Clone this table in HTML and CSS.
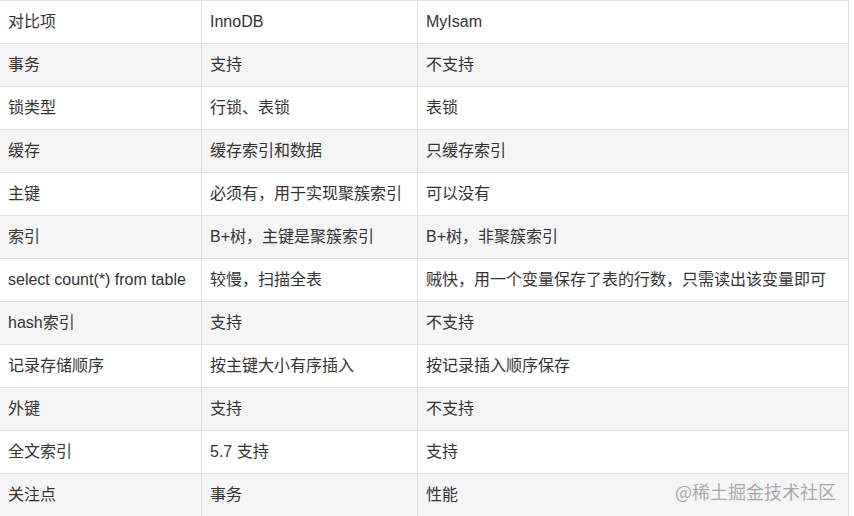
FILE: index.html
```html
<!DOCTYPE html>
<html lang="zh">
<head>
<meta charset="utf-8">
<link rel="stylesheet" href="styles.css">
</head>
<body>
<div class="wrap">
<table class="cmp">
<colgroup><col class="c1"><col class="c2"><col class="c3"></colgroup>
<tr><td>对比项</td><td>InnoDB</td><td>MyIsam</td></tr>
<tr><td>事务</td><td>支持</td><td>不支持</td></tr>
<tr><td>锁类型</td><td>行锁、表锁</td><td>表锁</td></tr>
<tr><td>缓存</td><td>缓存索引和数据</td><td>只缓存索引</td></tr>
<tr><td>主键</td><td>必须有，用于实现聚簇索引</td><td>可以没有</td></tr>
<tr><td>索引</td><td>B+树，主键是聚簇索引</td><td>B+树，非聚簇索引</td></tr>
<tr><td>select count(*) from table</td><td>较慢，扫描全表</td><td>贼快，用一个变量保存了表的行数，只需读出该变量即可</td></tr>
<tr><td>hash索引</td><td>支持</td><td>不支持</td></tr>
<tr><td>记录存储顺序</td><td>按主键大小有序插入</td><td>按记录插入顺序保存</td></tr>
<tr><td>外键</td><td>支持</td><td>不支持</td></tr>
<tr><td>全文索引</td><td>5.7 支持</td><td>支持</td></tr>
<tr><td>关注点</td><td>事务</td><td>性能</td></tr>
</table>
<div class="mark">@稀土掘金技术社区</div>
</div>
</body>
</html>
```
FILE: styles.css
```css
html, body {
  margin: 0;
  padding: 0;
  background: #fff;
}
.wrap {
  position: relative;
  width: 854px;
  height: 516px;
  overflow: hidden;
}
.cmp {
  border-collapse: collapse;
  table-layout: fixed;
  width: 849px;
  margin-top: -1px;
  margin-left: -1px;
  font-family: "Liberation Sans", "Noto Sans CJK SC", sans-serif;
  font-size: 16px;
  color: #333;
}
.c1 { width: 202px; }
.c2 { width: 216px; }
.c3 { width: 431px; }
.cmp td {
  border: 1px solid #dfdfdf;
  padding: 8px 8px;
  height: 26px;
  line-height: 26px;
  white-space: nowrap;
  overflow: hidden;
  vertical-align: middle;
}
.cmp tr:nth-child(even) td {
  background: #f5f5f5;
}
.cmp tr:first-child td {
  border-top: 2px solid #dfdfdf;
}
.mark {
  position: absolute;
  right: 18px;
  bottom: 14px;
  font-family: "Noto Sans CJK SC", sans-serif;
  font-size: 18px;
  line-height: 22px;
  color: #a8a8a8;
  text-shadow: 0 0 1px #fff;
}
```
